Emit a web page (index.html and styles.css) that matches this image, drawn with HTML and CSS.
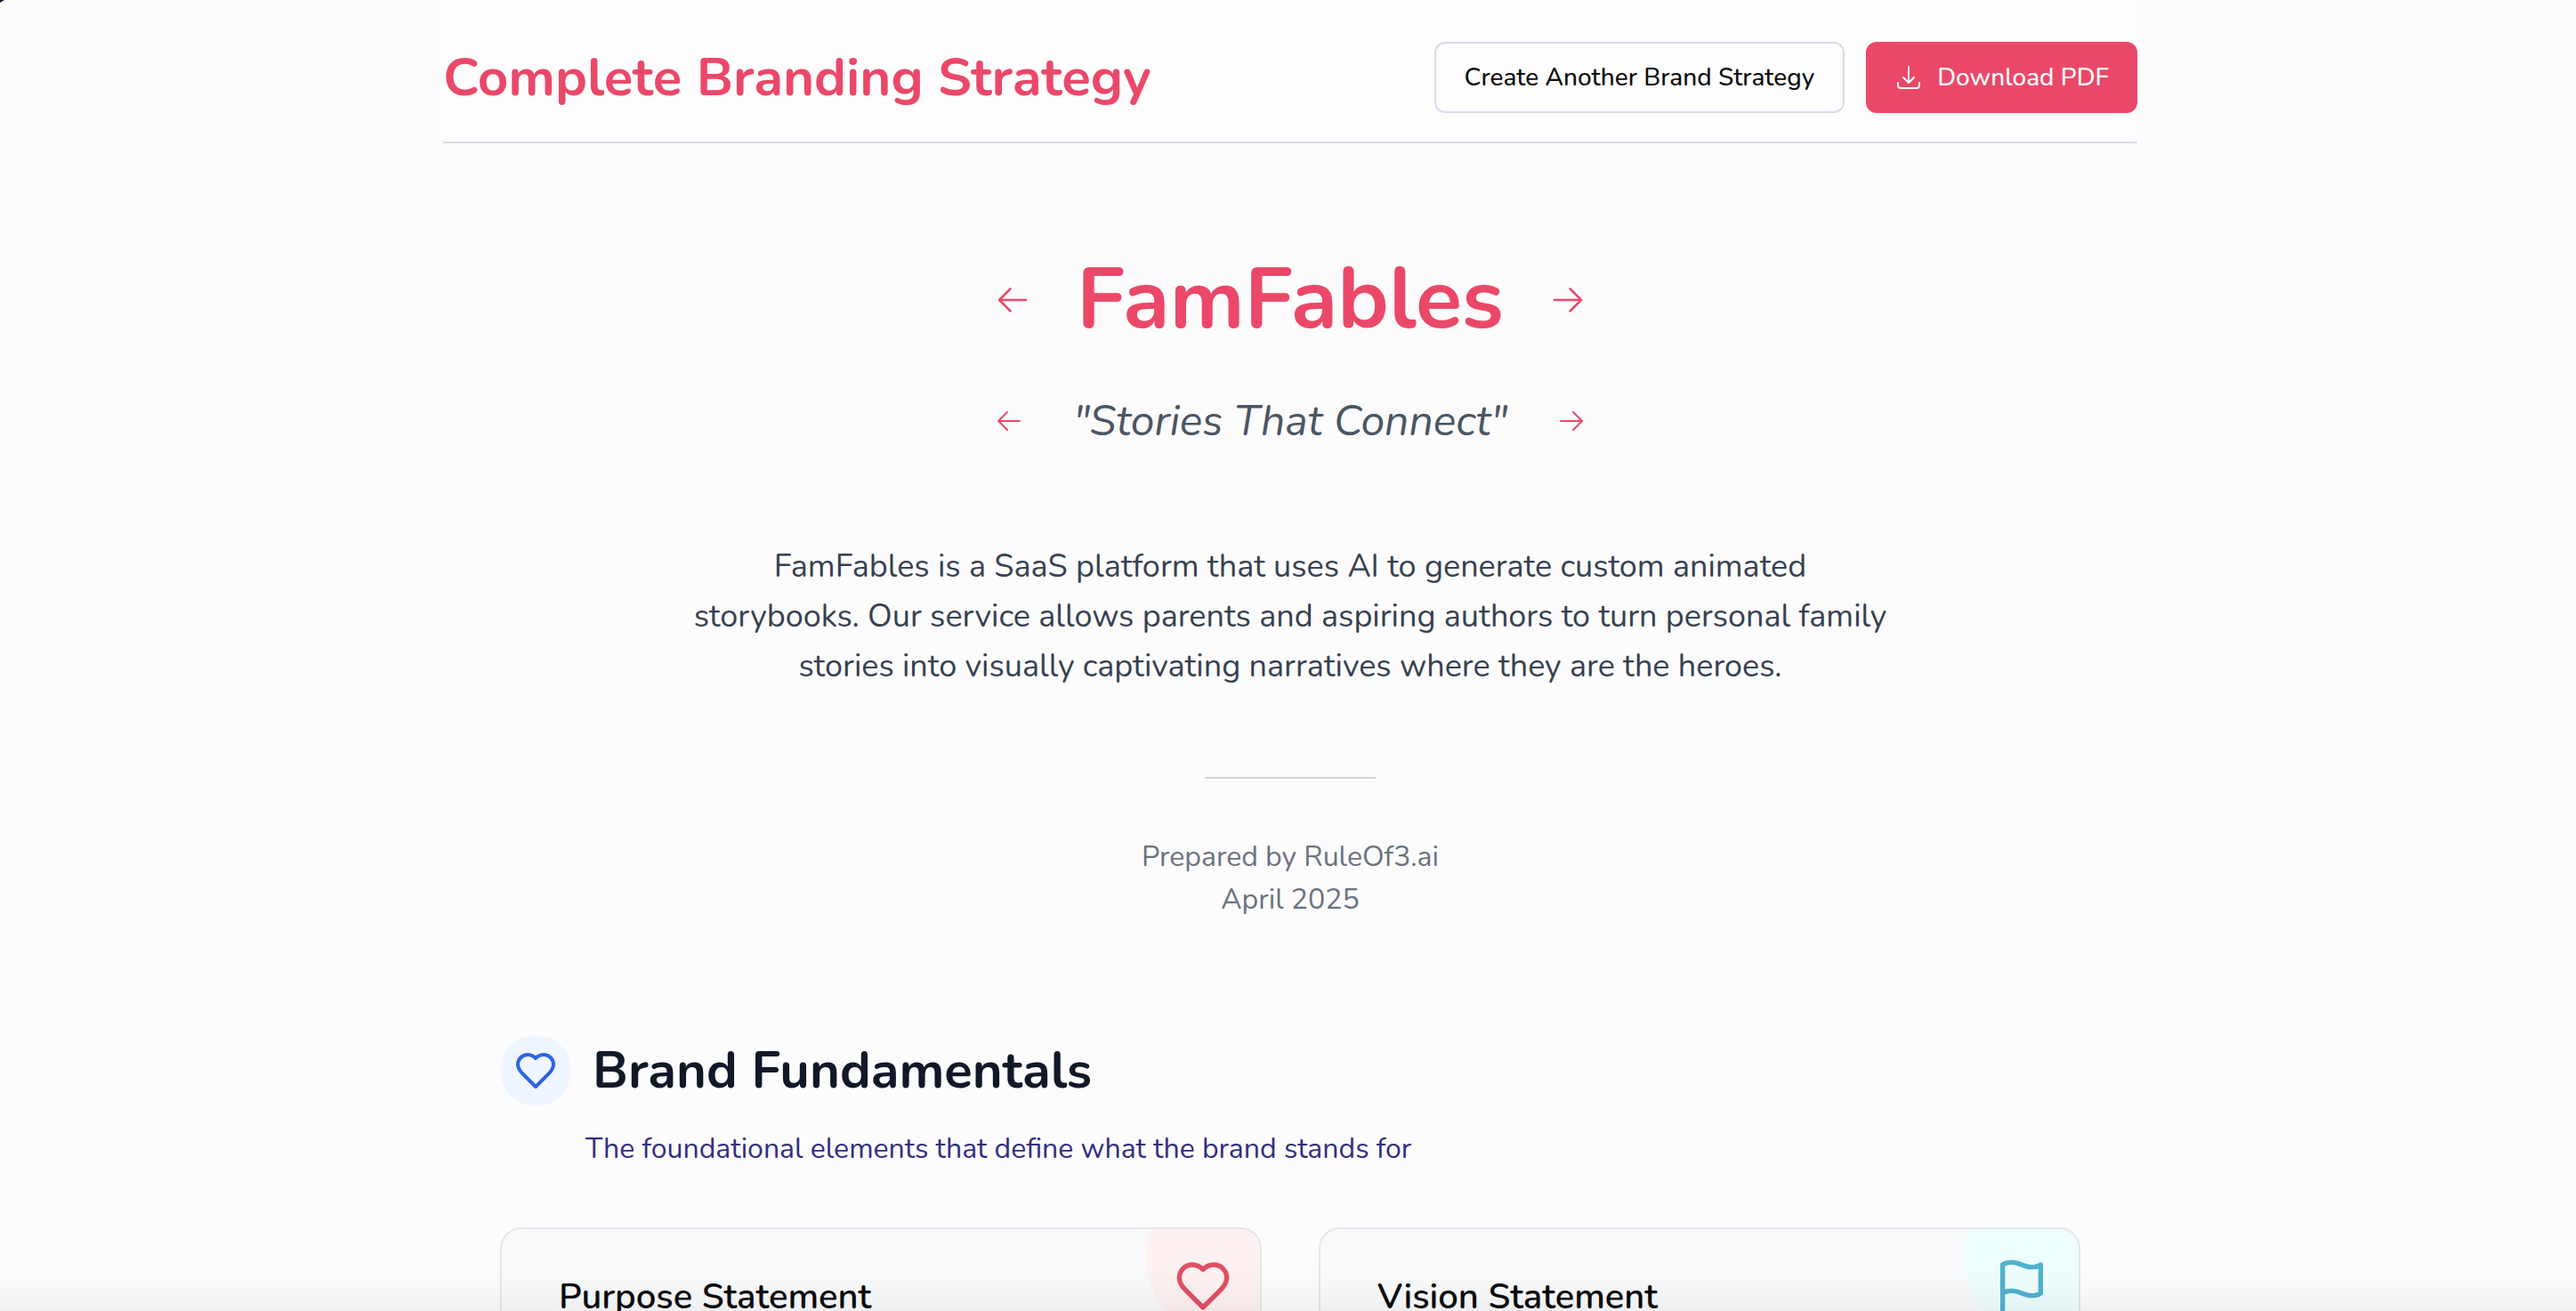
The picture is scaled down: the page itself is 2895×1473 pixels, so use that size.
FILE: index.html
```html
<!DOCTYPE html>
<html lang="en">
<head>
<meta charset="utf-8">
<meta name="viewport" content="width=device-width, initial-scale=1">
<title>Complete Branding Strategy</title>
<link rel="stylesheet" href="styles.css">
</head>
<body>
<div class="page">
  <header class="topbar">
    <h1 class="topbar-title">Complete Branding Strategy</h1>
    <div class="actions">
      <button type="button" class="btn btn-outline">Create Another Brand Strategy</button>
      <button type="button" class="btn btn-primary">
        <svg class="icon-md thin" viewBox="0 0 24 24" aria-hidden="true"><path d="M3 16.5v2.25A2.25 2.25 0 0 0 5.25 21h13.5A2.25 2.25 0 0 0 21 18.75V16.5M16.5 12 12 16.5m0 0L7.5 12m4.5 4.5V3"/></svg>
        Download PDF
      </button>
    </div>
  </header>

  <main>
    <section class="hero">
      <div class="picker">
        <button type="button" class="arrow" aria-label="Previous name"><svg class="icon-lg thin" viewBox="0 0 24 24" aria-hidden="true"><path d="M10.5 19.5 3 12m0 0 7.5-7.5M3 12h18"/></svg></button>
        <h2 class="brand-name">FamFables</h2>
        <button type="button" class="arrow" aria-label="Next name"><svg class="icon-lg thin" viewBox="0 0 24 24" aria-hidden="true"><path d="M13.5 4.5 21 12m0 0-7.5 7.5M21 12H3"/></svg></button>
      </div>
      <div class="picker">
        <button type="button" class="arrow" aria-label="Previous tagline"><svg class="icon-md thin" viewBox="0 0 24 24" aria-hidden="true"><path d="M10.5 19.5 3 12m0 0 7.5-7.5M3 12h18"/></svg></button>
        <p class="tagline">"Stories That Connect"</p>
        <button type="button" class="arrow" aria-label="Next tagline"><svg class="icon-md thin" viewBox="0 0 24 24" aria-hidden="true"><path d="M13.5 4.5 21 12m0 0-7.5 7.5M21 12H3"/></svg></button>
      </div>
      <p class="summary">FamFables is a SaaS platform that uses AI to generate custom animated storybooks. Our service allows parents and aspiring authors to turn personal family stories into visually captivating narratives where they are the heroes.</p>
      <hr class="rule">
      <div class="credit">
        <p>Prepared by RuleOf3.ai</p>
        <p>April 2025</p>
      </div>
    </section>

    <section class="fundamentals">
      <div class="section-head">
        <span class="badge"><svg class="icon-xl" viewBox="0 0 24 24" aria-hidden="true"><path d="M19 14c1.49-1.46 3-3.21 3-5.5A5.5 5.5 0 0 0 16.5 3c-1.76 0-3 .5-4.5 2-1.5-1.5-2.74-2-4.5-2A5.5 5.5 0 0 0 2 8.5c0 2.3 1.5 4.05 3 5.5l7 7Z"/></svg></span>
        <h2 class="section-title">Brand Fundamentals</h2>
      </div>
      <p class="section-note">The foundational elements that define what the brand stands for</p>
      <div class="cards">
        <article class="card card-purpose">
          <h3 class="card-title">Purpose Statement</h3>
          <svg class="card-icon" viewBox="0 0 24 24" aria-hidden="true"><path d="M19 14c1.49-1.46 3-3.21 3-5.5A5.5 5.5 0 0 0 16.5 3c-1.76 0-3 .5-4.5 2-1.5-1.5-2.74-2-4.5-2A5.5 5.5 0 0 0 2 8.5c0 2.3 1.5 4.05 3 5.5l7 7Z"/></svg>
        </article>
        <article class="card card-vision">
          <h3 class="card-title">Vision Statement</h3>
          <svg class="card-icon" viewBox="0 0 24 24" aria-hidden="true"><path d="M4 15s1-1 4-1 5 2 8 2 4-1 4-1V3s-1 1-4 1-5-2-8-2-4 1-4 1zM4 22v-7"/></svg>
        </article>
      </div>
    </section>
  </main>
</div>
<div class="corner"></div>
<div class="bottom-fade"></div>
</body>
</html>
```
FILE: styles.css
```css
* {
  box-sizing: border-box;
  margin: 0;
}

html {
  height: 100%;
  overflow: hidden;
}

body {
  height: 100%;
  overflow: hidden;
  padding-left: 5px;
  background: #fcfcfc;
  color: #0c0d0e;
  font-family: "Nunito", "Open Sans", sans-serif;
}

svg {
  display: block;
  flex: none;
  fill: none;
  stroke: currentColor;
  stroke-width: 2;
  stroke-linecap: round;
  stroke-linejoin: round;
}

.thin { stroke-width: 1.5; }
.icon-md { width: 32px; height: 32px; }
.icon-lg { width: 40px; height: 40px; }
.icon-xl { width: 48px; height: 48px; }

.page {
  max-width: 1904px;
  margin: 0 auto;
}

/* Header */
.topbar {
  display: flex;
  align-items: center;
  justify-content: space-between;
  padding: 47px 0 32px;
  border-bottom: 2px solid #dadaec;
  background: #fdfdfd;
}

.topbar-title {
  color: #eb4869;
  font-size: 60px;
  line-height: 72px;
  font-weight: 700;
}

.actions {
  display: flex;
  gap: 24px;
}

.btn {
  display: flex;
  align-items: center;
  gap: 16px;
  height: 80px;
  padding: 0 32px;
  border: 0;
  border-radius: 12px;
  font: 500 28px/40px "Nunito", "Open Sans", sans-serif;
}

.btn-outline {
  border: 2px solid #dadaec;
  background: #fdfdfd;
  color: #0c0d0e;
}

.btn-primary {
  background: #eb4869;
  color: #fcfcfc;
}

/* Hero */
.hero {
  display: flex;
  flex-direction: column;
  align-items: center;
  padding: 128px 0;
  text-align: center;
}

.picker {
  display: flex;
  align-items: center;
  justify-content: space-between;
  width: 100%;
  max-width: 664px;
  margin-bottom: 56px;
}

.picker + .picker { margin-bottom: 104px; }

.arrow {
  padding: 0;
  border: 0;
  background: none;
  color: #eb4869;
}

.brand-name {
  color: #eb4869;
  font-size: 96px;
  line-height: 96px;
  font-weight: 700;
}

.tagline {
  color: #4b5563;
  font-size: 48px;
  line-height: 64px;
  font-style: italic;
}

.summary {
  max-width: 1344px;
  color: #374151;
  font-size: 36px;
  line-height: 56px;
}

.rule {
  width: 192px;
  height: 2px;
  margin: 96px 0 64px;
  border: 0;
  background: #d1d5db;
}

.credit {
  color: #6b7280;
  font-size: 32px;
  line-height: 48px;
}

/* Fundamentals */
.fundamentals { padding: 0 64px; }

.section-head {
  display: flex;
  align-items: center;
  gap: 24px;
}

.badge {
  display: grid;
  place-items: center;
  width: 80px;
  height: 80px;
  border-radius: 50%;
  background: #eff6ff;
  color: #2f63e9;
}

.section-title {
  color: #111827;
  font-size: 58px;
  line-height: 72px;
  font-weight: 700;
}

.section-note {
  margin: 24px 0 64px 96px;
  color: #312e81;
  font-size: 32px;
  line-height: 48px;
}

.cards {
  display: grid;
  grid-template-columns: 1fr 1fr;
  gap: 64px;
}

.card {
  position: relative;
  overflow: hidden;
  padding: 48px 64px;
  border: 2px solid #e5e7eb;
  border-radius: 24px;
  background: #f9fafc;
}

/* Tinted disc cut off by the card's corner */
.card::before {
  content: "";
  position: absolute;
  top: -64px;
  right: -64px;
  width: 192px;
  height: 192px;
  border-radius: 50%;
}

.card-purpose::before { background: #fef1f1; }
.card-vision::before { background: #eefeff; }

.card-icon {
  position: absolute;
  top: 32px;
  right: 32px;
  width: 64px;
  height: 64px;
}

.card-purpose .card-icon { color: #e25064; }
.card-vision .card-icon { color: #50b2d0; }

.card-title {
  font-size: 40px;
  line-height: 56px;
  font-weight: 600;
}

/* Window edges */
.corner {
  position: fixed;
  top: 0;
  left: 0;
  width: 5px;
  height: 3px;
  background: #14183a;
  clip-path: polygon(0 0, 100% 0, 0 100%);
}

.bottom-fade {
  position: fixed;
  right: 0;
  bottom: 0;
  left: 0;
  height: 56px;
  background: linear-gradient(to bottom, rgba(0, 0, 0, 0), rgba(0, 0, 0, 0.012) 50%, rgba(0, 0, 0, 0.045));
  pointer-events: none;
}
```
